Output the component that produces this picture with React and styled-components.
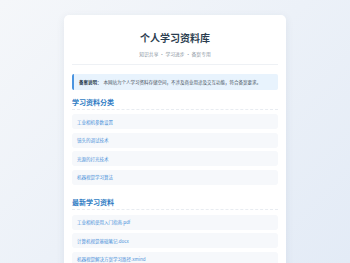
import React from 'react'
import styled, {createGlobalStyle} from 'styled-components'

const GlobalStyle = createGlobalStyle`
  html, body {
    margin: 0;
    padding: 0;
  }
  body {
    font-family: "Noto Sans CJK SC", "Noto Sans", sans-serif;
    background: linear-gradient(135deg, #f5f7fa 0%, #e3ebf6 100%);
    min-height: 100vh;
    overflow: hidden;
  }
`

const Page = styled.div`
  height: 263px;
  padding-top: 15px;
  box-sizing: border-box;
  overflow: hidden;
`

const Card = styled.div`
  width: 222px;
  margin: 0 auto;
  background: #ffffff;
  border-radius: 5px;
  box-shadow: 0 2px 8px rgba(40, 60, 90, 0.08);
  padding: 15px 8px 12px;
  box-sizing: border-box;
`

const Header = styled.header`
  text-align: center;
  padding-bottom: 6px;
  border-bottom: 1px solid #eef1f5;
`

const Title = styled.h1`
  margin: 0;
  font-size: 10px;
  line-height: 16px;
  font-weight: 700;
  color: #2c3e50;
`

const Subtitle = styled.p`
  margin: 4px 0 0;
  font-size: 4.8px;
  line-height: 8px;
  color: #8a94a0;
`

const Notice = styled.div`
  margin-top: 9px;
  background: #e8f3fd;
  border-left: 2px solid #4a94e0;
  border-radius: 2px;
  padding: 0 5px;
  height: 16px;
  display: flex;
  align-items: center;
  white-space: nowrap;
  font-size: 4.5px;
  color: #4a5563;
`

const NoticeLabel = styled.strong`
  color: #2c3e50;
  font-weight: 700;
  margin-right: 2px;
`

const Section = styled.section`
  margin-top: ${props => props.$top || 7}px;
`

const SectionTitle = styled.h2`
  margin: 0;
  font-size: 7px;
  line-height: 10px;
  font-weight: 700;
  color: #2f7cc4;
  padding-bottom: 2px;
  border-bottom: 1px dashed #e8ecf1;
`

const List = styled.ul`
  list-style: none;
  margin: ${props => props.$top || 4}px 0 0;
  padding: 0;
  display: flex;
  flex-direction: column;
  gap: 3.5px;
`

const Item = styled.li`
  height: 15px;
  display: flex;
  align-items: center;
  padding: 0 5px;
  background: #f6f8fb;
  border-radius: 3px;
  font-size: 4.5px;
  color: #4a90d9;
  white-space: nowrap;
`

const categories = ['工业相机参数设置', '镜头的调试技术', '光源的打光技术', '机器视觉学习算法']
const files = ['工业相机使用入门指南.pdf', '计算机视觉基础笔记.docx', '机器视觉解决方案学习路径.xmind']

export default function App() {
  return (
    <>
      <GlobalStyle />
      <Page>
        <Card>
          <Header>
            <Title>个人学习资料库</Title>
            <Subtitle>知识共享 • 学习进步 • 备案专用</Subtitle>
          </Header>
          <Notice>
            <NoticeLabel>备案说明：</NoticeLabel>
            本网站为个人学习资料存储空间，不涉及商业用途及交互功能，符合备案要求。
          </Notice>
          <Section $top={7}>
            <SectionTitle>学习资料分类</SectionTitle>
            <List $top={4}>
              {categories.map(c => <Item key={c}>{c}</Item>)}
            </List>
          </Section>
          <Section $top={12}>
            <SectionTitle>最新学习资料</SectionTitle>
            <List $top={5}>
              {files.map(f => <Item key={f}>{f}</Item>)}
            </List>
          </Section>
        </Card>
      </Page>
    </>
  )
}
